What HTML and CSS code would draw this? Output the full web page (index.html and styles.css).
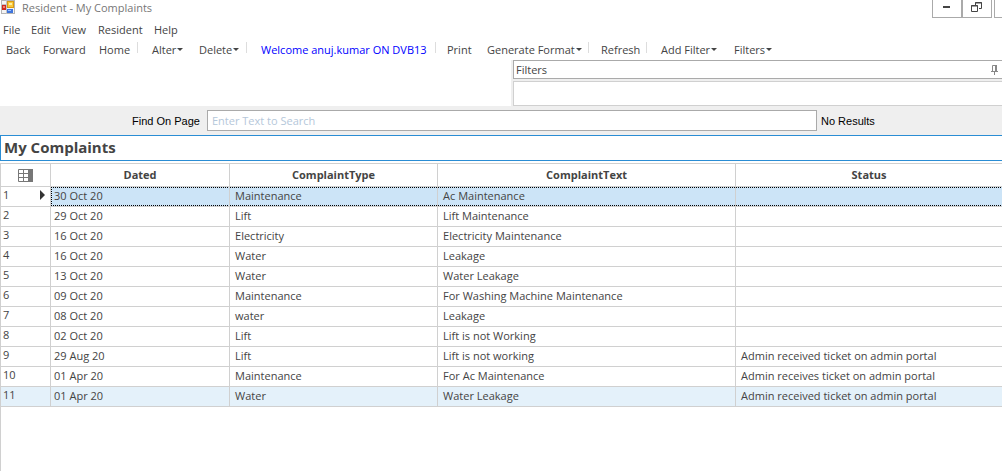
FILE: index.html
```html
<!DOCTYPE html>
<html lang="en">
<head>
<meta charset="utf-8">
<title>Resident - My Complaints</title>
<link rel="stylesheet" href="styles.css">
</head>
<body>
<header class="titlebar">
  <svg class="app-icon" width="14" height="14" viewBox="0 0 14 14" aria-hidden="true">
    <rect x="0.5" y="0.5" width="13" height="13" fill="#f4f4f4" stroke="#b5b5b5"/>
    <path d="M0 4.5h6M5.5 0v14" stroke="#c4c4c4"/>
    <rect x="1" y="5" width="4" height="5" fill="#cf2a20"/>
    <rect x="2" y="6" width="2" height="2" fill="#f0806e"/>
    <rect x="6.500" y="1.500" width="6" height="6" fill="#fbc93a" stroke="#d99a12"/>
    <path d="M8 3h3v2H8z" fill="#fff0a0"/>
    <rect x="6" y="9" width="6" height="4" fill="#3e74dc"/>
    <rect x="7" y="10" width="3" height="1" fill="#9cc0ff"/>
  </svg>
  <span class="window-title">Resident - My Complaints</span>
  <div class="window-controls">
    <button type="button" class="win-btn" aria-label="Minimize">
      <svg width="8" height="2"><rect width="7" height="2" fill="#444"/></svg>
    </button>
    <button type="button" class="win-btn" aria-label="Restore">
      <svg width="12" height="10" viewBox="0 0 12 10"><path d="M4.500 3V.5h6v6H8M4 1h7M.5 3.500h6v6h-6zM0 4h7" fill="none" stroke="#444"/></svg>
    </button>
    <button type="button" class="win-btn win-close" aria-label="Close"></button>
  </div>
</header>

<nav class="menubar">
  <button type="button">File</button>
  <button type="button">Edit</button>
  <button type="button">View</button>
  <button type="button">Resident</button>
  <button type="button">Help</button>
</nav>

<div class="toolbar">
  <button type="button">Back</button>
  <button type="button">Forward</button>
  <button type="button">Home</button>
  <i class="sep"></i>
  <button type="button" class="drop">Alter</button>
  <button type="button" class="drop">Delete</button>
  <i class="sep"></i>
  <span class="welcome">Welcome anuj.kumar ON DVB13</span>
  <i class="sep"></i>
  <button type="button">Print</button>
  <button type="button" class="drop">Generate Format</button>
  <i class="sep"></i>
  <button type="button">Refresh</button>
  <i class="sep"></i>
  <button type="button" class="drop">Add Filter</button>
  <button type="button" class="drop">Filters</button>
</div>

<section class="dock">
  <div class="filters">
    <div class="filters-head">
      <span>Filters</span>
      <button type="button" class="pin" aria-label="Pin">
        <svg width="7" height="10" viewBox="0 0 7 10"><path d="M1.500 6V.5h4V6M0 6.500h7M3.500 7v3" fill="none" stroke="#888"/><path d="M4 0h2v6H4z" fill="#888"/></svg>
      </button>
    </div>
    <div class="filters-body"></div>
  </div>
</section>

<div class="search">
  <label for="find">Find On Page</label>
  <input id="find" type="text" placeholder="Enter Text to Search">
  <span>No Results</span>
</div>

<h1 class="heading">My Complaints</h1>

<main class="grid-wrap">
<table class="grid">
  <colgroup><col class="c-num"><col class="c-date"><col class="c-type"><col class="c-text"><col></colgroup>
  <thead>
    <tr>
      <th class="corner"><svg width="15" height="13" viewBox="0 0 15 13" aria-label="Columns"><path d="M.5.5h14v12H.5zM0 4.500h10M0 8.500h10M5.500 0v13" fill="none" stroke="#777"/><path d="M10 0h5v13h-5z" fill="#777"/></svg></th>
      <th>Dated</th><th>ComplaintType</th><th>ComplaintText</th><th>Status</th>
    </tr>
  </thead>
  <tbody>
    <tr class="selected"><td><div class="current">1<svg width="5" height="10" viewBox="0 0 5 10" aria-hidden="true"><path d="M0 0l5 5-5 5z" fill="#333"/></svg></div></td><td>30 Oct 20</td><td>Maintenance</td><td>Ac Maintenance</td><td></td></tr>
    <tr><td>2</td><td>29 Oct 20</td><td>Lift</td><td>Lift Maintenance</td><td></td></tr>
    <tr><td>3</td><td>16 Oct 20</td><td>Electricity</td><td>Electricity Maintenance</td><td></td></tr>
    <tr><td>4</td><td>16 Oct 20</td><td>Water</td><td>Leakage</td><td></td></tr>
    <tr><td>5</td><td>13 Oct 20</td><td>Water</td><td>Water Leakage</td><td></td></tr>
    <tr><td>6</td><td>09 Oct 20</td><td>Maintenance</td><td>For Washing Machine Maintenance</td><td></td></tr>
    <tr><td>7</td><td>08 Oct 20</td><td>water</td><td>Leakage</td><td></td></tr>
    <tr><td>8</td><td>02 Oct 20</td><td>Lift</td><td>Lift is not Working</td><td></td></tr>
    <tr><td>9</td><td>29 Aug 20</td><td>Lift</td><td>Lift is not working</td><td>Admin received ticket on admin portal</td></tr>
    <tr><td>10</td><td>01 Apr 20</td><td>Maintenance</td><td>For Ac Maintenance</td><td>Admin receives ticket on admin portal</td></tr>
    <tr class="hover"><td>11</td><td>01 Apr 20</td><td>Water</td><td>Water Leakage</td><td>Admin received ticket on admin portal</td></tr>
  </tbody>
</table>
</main>
</body>
</html>
```

FILE: styles.css
```css
* { box-sizing: border-box; }

body {
  margin: 0;
  min-height: 100vh;
  display: flex;
  flex-direction: column;
  overflow: hidden;
  background: #fff;
  color: #444;
  font: 11px/16px "Open Sans", "Noto Sans", sans-serif;
}

button {
  padding: 0;
  border: 0;
  background: none;
  color: inherit;
  font: inherit;
  text-align: left;
  white-space: nowrap;
}

svg { display: block; }

.titlebar {
  display: flex;
  align-items: flex-start;
  height: 20px;
  padding-left: 1px;
  color: #777;
}

.window-title { margin-left: 7px; }

.window-controls {
  display: flex;
  margin-left: auto;
}

.win-btn {
  display: flex;
  justify-content: center;
  width: 30px;
  height: 18px;
  padding-top: 2px;
  border: 1px solid #aaa;
  border-top: 0;
}

.win-btn:first-child { padding-top: 6px; }

.win-close {
  width: 8px;
  margin-left: 2px;
  border-right: 0;
}

.menubar {
  display: grid;
  grid-template-columns: 28px 31px 36px 56px auto;
  align-items: start;
  justify-content: start;
  height: 20px;
  padding: 2px 0 0 3px;
}

.toolbar {
  display: grid;
  grid-template-columns: 37px 56px 38px 15px 47px 47px 15px 174px 12px 40px 101px 13px 45px 15px 73px auto;
  align-items: start;
  justify-content: start;
  height: 20px;
  padding: 2px 0 0 6px;
  white-space: nowrap;
}

.sep {
  width: 1px;
  height: 11px;
  background: #ddd;
}

.drop::after {
  content: "";
  display: inline-block;
  margin-left: 1px;
  vertical-align: 3px;
  border: 3px solid transparent;
  border-top-color: #444;
  border-bottom: 0;
}

.welcome { color: #00f; }

.dock {
  display: flex;
  justify-content: flex-end;
}

.filters {
  width: 49%;
  padding-left: 2px;
  background: #efefef;
}

.filters-head {
  display: flex;
  align-items: center;
  justify-content: space-between;
  height: 19px;
  padding: 0 4px 0 2px;
  border: 1px solid #aaa;
  border-right: 0;
  background: #fff;
}

.filters-body {
  height: 25px;
  margin-top: 2px;
  border: 1px solid #d0d0d0;
  border-right: 0;
  background: #fff;
}

.search {
  display: flex;
  align-items: center;
  gap: 4px;
  height: 29px;
  padding: 0 126px 0 132px;
  background: #efefef;
  color: #000;
  font: 11px/16px "Liberation Sans", sans-serif;
  white-space: nowrap;
}

.search label { flex: 0 0 71px; }
.search span { flex: 0 0 55px; }

.search input {
  flex: 1;
  min-width: 0;
  height: 21px;
  padding: 0 4px 1px;
  border: 1px solid #aaa;
  background: #fff;
  font: 11px/16px "Open Sans", "Noto Sans", sans-serif;
}

.search input::placeholder { color: #b5c7da; }

.heading {
  height: 26px;
  margin: 0 0 2px;
  padding: 0 3px;
  border: 1px solid #2a8dd4;
  border-right: 0;
  font-size: 15px;
  line-height: 22px;
}

.grid-wrap {
  flex: 1;
  border: 1px solid #d0d0d0;
  border-width: 1px 0 0 1px;
}

.grid {
  width: 100%;
  border-collapse: separate;
  border-spacing: 0;
  table-layout: fixed;
}

.c-num { width: 5%; }
.c-date { width: 179px; }
.c-type { width: 208px; }
.c-text { width: 298px; }

.grid th,
.grid td {
  height: 20px;
  padding: 0 5px 2px;
  border: 1px solid #d0d0d0;
  border-width: 0 1px 1px 0;
  line-height: 16px;
  text-align: left;
  white-space: nowrap;
}

.grid th {
  height: 23px;
  padding-bottom: 0;
  text-align: center;
}

.grid th:last-child,
.grid td:last-child { border-right: 0; }

.grid td:first-child { padding: 0 2px 3px; }
.grid td:nth-child(2) { padding-left: 3px; }

.corner svg { margin: 0 auto; }

.current {
  display: flex;
  align-items: center;
  justify-content: space-between;
  padding-right: 3px;
}

.selected td:not(:first-child) {
  background:
    repeating-linear-gradient(90deg, #000 0 1px, transparent 1px 2px) top / 100% 1px no-repeat,
    repeating-linear-gradient(90deg, #000 0 1px, transparent 1px 2px) bottom / 100% 1px no-repeat,
    #cce4f7;
  background-clip: padding-box;
}

.selected td:nth-child(2) {
  background:
    repeating-linear-gradient(90deg, #000 0 1px, transparent 1px 2px) top / 100% 1px no-repeat,
    repeating-linear-gradient(90deg, #000 0 1px, transparent 1px 2px) bottom / 100% 1px no-repeat,
    repeating-linear-gradient(#000 0 1px, transparent 1px 2px) left / 1px 100% no-repeat,
    #cce4f7;
  background-clip: padding-box;
}

.hover td { background: #e4f1fa; }
```
